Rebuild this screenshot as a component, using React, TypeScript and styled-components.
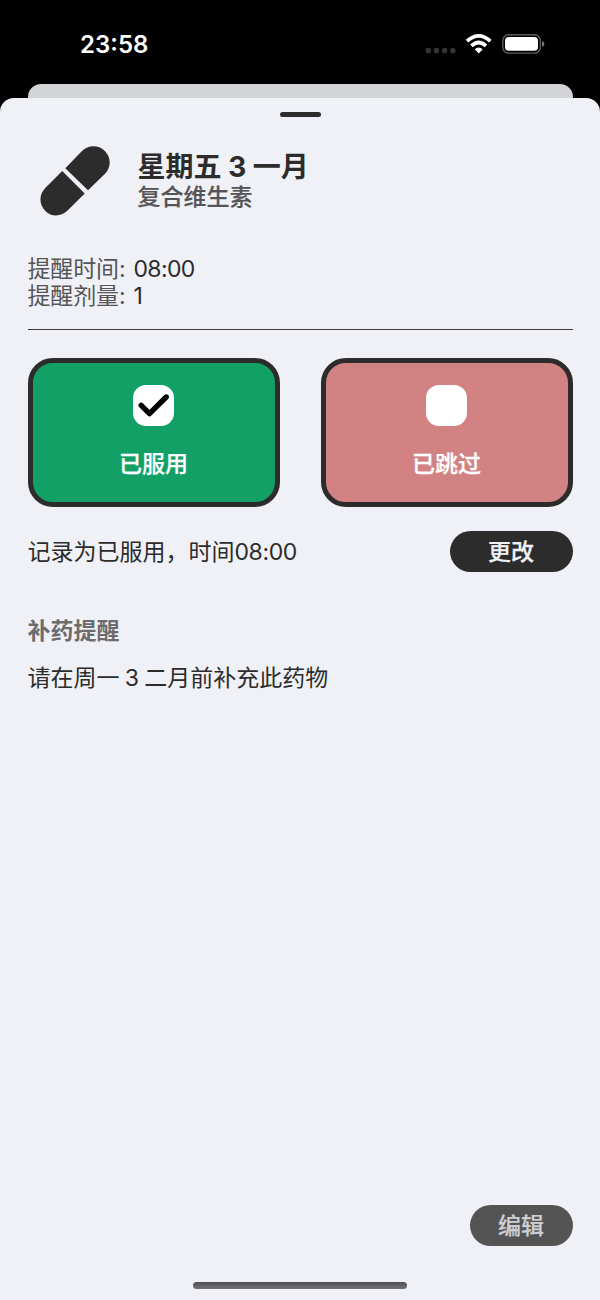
import React from 'react';
import styled, { createGlobalStyle } from 'styled-components';

const Global = createGlobalStyle`
  * { box-sizing: border-box; }
  body {
    margin: 0;
    background: #000;
    font-family: Inter, "Noto Sans CJK SC", sans-serif;
    color: #2c2c2c;
    white-space: nowrap;
  }
`;

const Screen = styled.div`
  width: 600px;
  height: 1300px;
  display: flex;
  flex-direction: column;
  overflow: hidden;
  background: #000;
`;

const StatusBar = styled.header`
  height: 84px;
  flex: none;
  display: flex;
  align-items: flex-start;
  justify-content: space-between;
  padding: 30px 55px 0 80px;
  color: #fff;
`;

const Clock = styled.time`
  font-size: 24px;
  line-height: 30px;
  font-weight: 600;
`;

const StatusIcons = styled.svg`
  display: block;
  width: 120px;
  height: 28px;
`;

const BackSheet = styled.div`
  flex: none;
  height: 14px;
  margin: 0 27.5px;
  border-radius: 13px 13px 0 0;
  background: #d3d4d8;
`;

const Sheet = styled.main`
  flex: 1;
  display: flex;
  flex-direction: column;
  padding: 14px 27.5px 11px;
  border-radius: 14px 14px 0 0;
  background: #f0f1f6;
`;

const Grabber = styled.div`
  flex: none;
  width: 41px;
  height: 5px;
  border-radius: 3px;
  align-self: center;
  background: #2c2c2c;
`;

const Heading = styled.section`
  display: flex;
  height: 71px;
  margin-top: 29px;
  padding-left: 12px;
  gap: 27px;
`;

const PillIcon = styled.svg`
  width: 71px;
  height: 71px;
  flex: none;
`;

const Title = styled.h1`
  margin: 5px 0 0;
  font-size: 28px;
  line-height: 33px;
  font-weight: 700;
`;

const Subtitle = styled.p`
  margin: -1px 0 0;
  font-size: 23px;
  line-height: 28px;
  font-weight: 500;
  color: #555557;
  -webkit-text-stroke: 0.2px #555557;
`;

const Details = styled.dl`
  margin: 39px 0 0;
  padding-bottom: 19px;
  border-bottom: 1.5px solid #3c3c3e;
`;

const Detail = styled.div`
  display: flex;
  gap: 8px;
  font-size: 23px;
  line-height: 27px;
  dt { color: #555557; letter-spacing: -0.15px; }
  dd { margin: 0; letter-spacing: -0.6px; }
`;

const Choices = styled.section`
  display: grid;
  grid-template-columns: 1fr 1fr;
  gap: 41px;
  margin-top: 28px;
`;

const Choice = styled.button<{ $color: string }>`
  height: 149px;
  padding: 22px 0 0;
  display: flex;
  flex-direction: column;
  align-items: center;
  border: 5.5px solid #2c2c2c;
  border-radius: 25px;
  background: ${(p) => p.$color};
  color: #fff;
  font: 500 23px/28px Inter, "Noto Sans CJK SC", sans-serif;
  -webkit-text-stroke: 0.25px #fff;
`;

const Checkbox = styled.span`
  width: 41px;
  height: 41px;
  margin-bottom: 24px;
  border-radius: 13px;
  background: #fff;
  svg { display: block; }
`;

const LogRow = styled.section`
  display: flex;
  justify-content: space-between;
  align-items: flex-start;
  margin-top: 24px;
  font-size: 23px;
  line-height: 42px;
`;

const LogTime = styled.time`
  letter-spacing: -0.4px;
`;

const Button = styled.button<{ $width: number; $muted?: boolean }>`
  width: ${(p) => p.$width}px;
  height: 41px;
  padding: 0;
  border: 0;
  border-radius: 21px;
  background: ${(p) => (p.$muted ? '#545454' : '#2c2c2c')};
  color: ${(p) => (p.$muted ? '#cfcfd2' : '#f0f1f6')};
  font: 500 23px/43px Inter, "Noto Sans CJK SC", sans-serif;
  -webkit-text-stroke: 0.25px currentColor;
`;

const RefillTitle = styled.h2`
  margin: 44px 0 0;
  font-size: 23px;
  line-height: 28px;
  font-weight: 700;
  color: #6c6c6e;
`;

const RefillText = styled.p`
  margin: 19px 0 0;
  font-size: 23px;
  line-height: 28px;
  word-spacing: -1.2px;
`;

const Footer = styled.footer`
  margin-top: auto;
  display: flex;
  flex-direction: column;
  align-items: flex-end;
`;

const HomeIndicator = styled.div`
  width: 214px;
  height: 7px;
  margin-top: 36px;
  align-self: center;
  border-radius: 4px;
  background: linear-gradient(#515154, #747477);
`;

export default function App() {
  return (
    <Screen>
      <Global />
      <StatusBar>
        <Clock>23:58</Clock>
        <StatusIcons viewBox="425 30 120 28">
          <g fill="#363636">
            <rect x="425.7" y="48" width="5.2" height="5.2" rx="1.8" />
            <rect x="433.8" y="48" width="5.2" height="5.2" rx="1.8" />
            <rect x="442" y="48" width="5.2" height="5.2" rx="1.8" />
            <rect x="450.2" y="48" width="5.2" height="5.2" rx="1.8" />
          </g>
          <g fill="none" stroke="#fff" strokeWidth="3.6">
            <path d="M467 41.2 Q478.7 30.6 490.4 41.2" />
            <path d="M471.4 45.8 Q478.7 39.2 486 45.8" />
          </g>
          <path d="M474.7 49.3 Q478.7 45.8 482.7 49.3 L478.7 53.4 Z" fill="#fff" />
          <rect x="502.8" y="34.7" width="37.5" height="18.4" rx="5.8" fill="none" stroke="#5c5c5c" strokeWidth="1.4" />
          <rect x="505" y="37" width="33" height="13.8" rx="3.8" fill="#fff" />
          <path d="M542 41 Q544.4 41.7 544.4 43.9 Q544.4 46.1 542 46.8 Z" fill="#777" />
        </StatusIcons>
      </StatusBar>
      <BackSheet />
      <Sheet>
        <Grabber />
        <Heading>
          <PillIcon viewBox="40 146 71 71">
            <path fill="#2c2c2c" d="M65.3 168.3 L81.5 151.4 C88 145 98 144.4 104.6 150.8 C111.4 157.4 111.2 167.5 105.3 173.5 L88 190.3 Z" />
            <path fill="#2c2c2c" d="M62.2 171 L84.7 193.5 L68.3 209.7 C61.8 216.6 52 217.6 45.3 210.9 C38.6 204 39 194.4 45.5 187.8 Z" />
          </PillIcon>
          <div>
            <Title>星期五 3 一月</Title>
            <Subtitle>复合维生素</Subtitle>
          </div>
        </Heading>
        <Details>
          <Detail><dt>提醒时间:</dt><dd>08:00</dd></Detail>
          <Detail><dt>提醒剂量:</dt><dd>1</dd></Detail>
        </Details>
        <Choices>
          <Choice $color="#12a067">
            <Checkbox>
              <svg width="41" height="41" viewBox="0 0 41 41" fill="none" stroke="#000" strokeWidth="5.4" strokeLinecap="round" strokeLinejoin="round">
                <path d="M8.2 20.3 L16.5 28.6 L33.2 12" />
              </svg>
            </Checkbox>
            已服用
          </Choice>
          <Choice $color="#d38283">
            <Checkbox />
            已跳过
          </Choice>
        </Choices>
        <LogRow>
          <span>记录为已服用，时间<LogTime>08:00</LogTime></span>
          <Button $width={123}>更改</Button>
        </LogRow>
        <RefillTitle>补药提醒</RefillTitle>
        <RefillText>请在周一 3 二月前补充此药物</RefillText>
        <Footer>
          <Button $width={103} $muted>编辑</Button>
          <HomeIndicator />
        </Footer>
      </Sheet>
    </Screen>
  );
}
